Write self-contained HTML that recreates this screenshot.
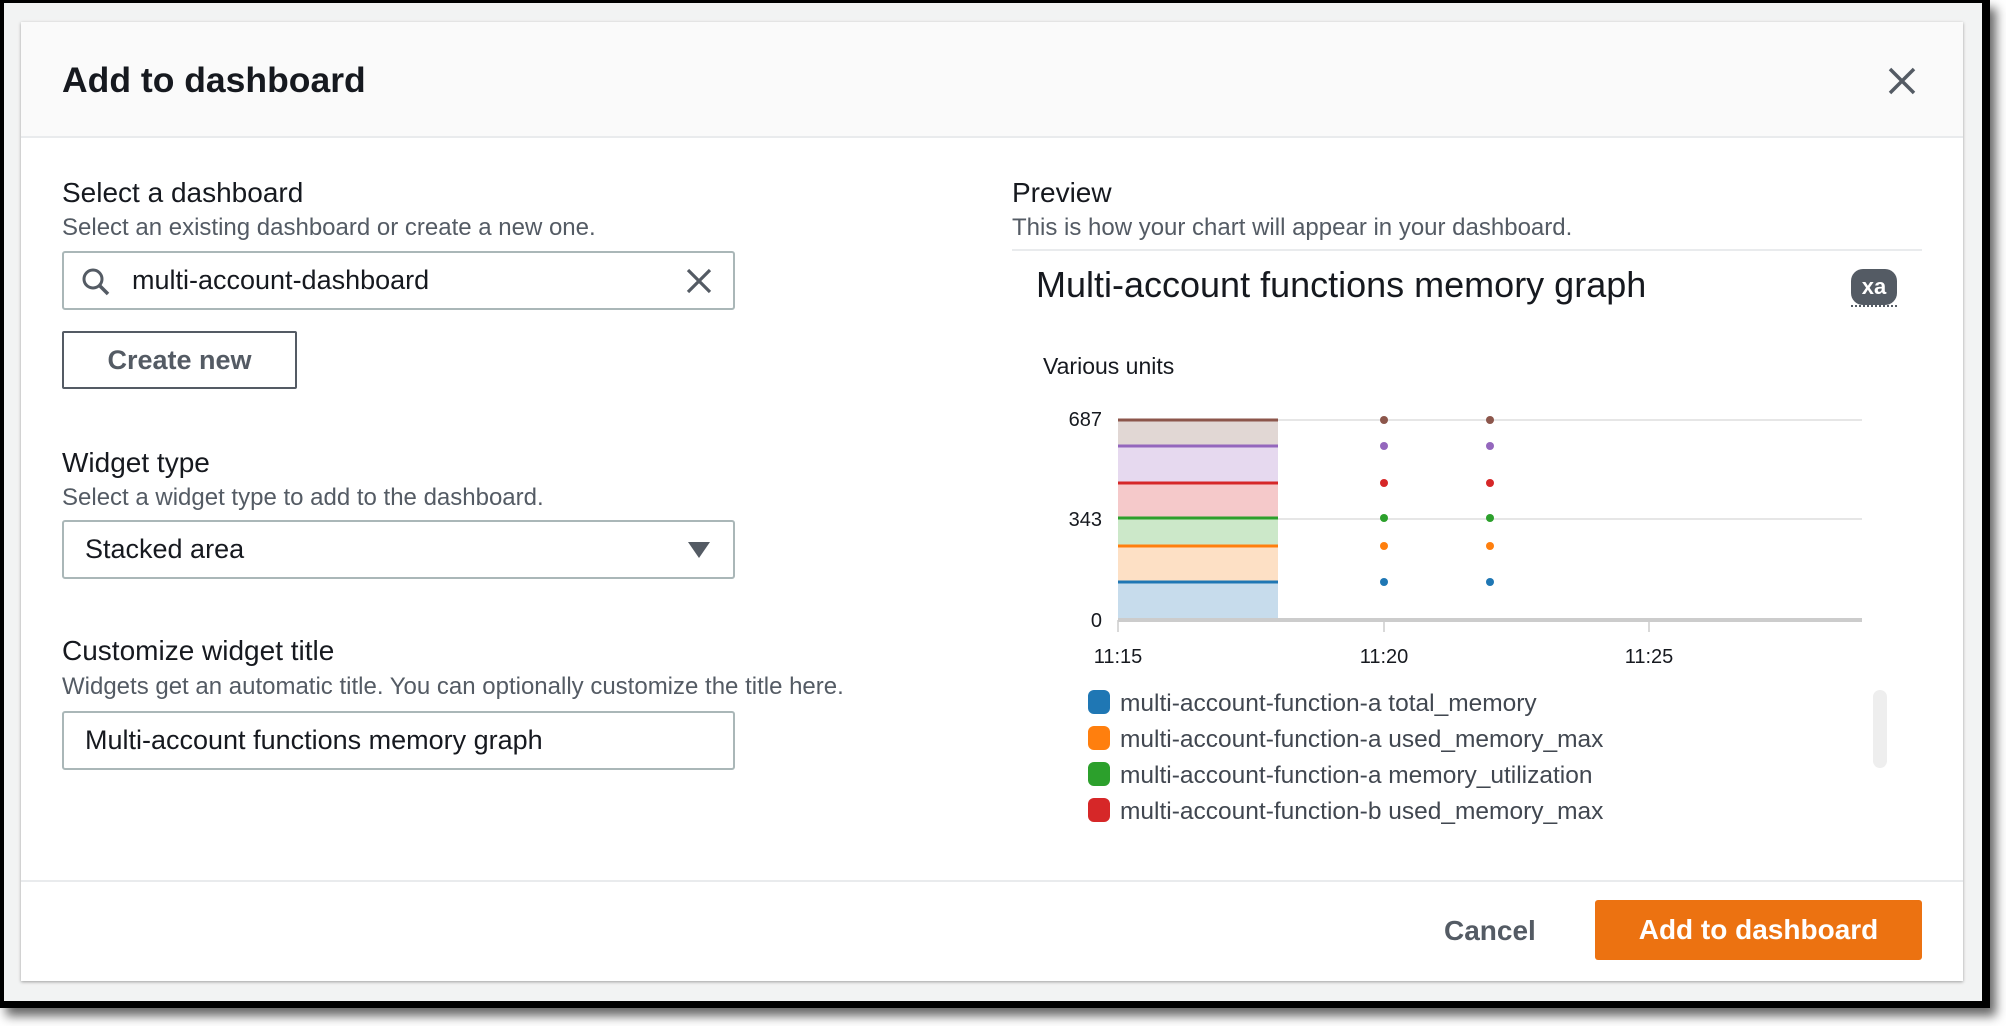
<!DOCTYPE html>
<html><head><meta charset="utf-8"><style>
*{margin:0;padding:0;box-sizing:border-box}
body{width:2006px;height:1026px;background:#fff;position:relative;overflow:hidden;font-family:"Liberation Sans",sans-serif;color:#16191f}
.frame{position:absolute;left:0;top:0;width:1990px;height:1008px;background:#000;box-shadow:6px 8px 10px rgba(0,0,0,.6)}
.bg{position:absolute;left:4px;top:3px;width:1978px;height:998px;background:#f2f3f3}
.modal{position:absolute;left:21px;top:22px;width:1942px;height:959px;background:#fff;box-shadow:0 1px 3px rgba(0,0,0,.35)}
.hdr{position:absolute;left:0;top:0;width:100%;height:116px;background:#fafafa;border-bottom:2px solid #e9ebed}
.abs{position:absolute;white-space:nowrap}
.lbl{font-size:28px;color:#16191f}
.desc{font-size:24px;color:#545b64}
.inp{position:absolute;border:2px solid #aab7b8;border-radius:3px;background:#fff}
</style></head><body>
<div class="frame"></div>
<div class="bg"></div>
<div class="modal">
 <div class="hdr"></div>
 <div class="abs" style="left:41px;top:38px;font-size:35.5px;font-weight:bold">Add to dashboard</div>
 <svg class="abs" style="left:1866px;top:44px" width="30" height="30" viewBox="0 0 30 30"><path d="M3 3L27 27M27 3L3 27" stroke="#545b64" stroke-width="3.5" fill="none"/></svg>

 <div class="abs lbl" style="left:41px;top:155px">Select a dashboard</div>
 <div class="abs desc" style="left:41px;top:192px">Select an existing dashboard or create a new one.</div>
 <div class="inp" style="left:41px;top:229px;width:673px;height:59px"></div>
 <svg class="abs" style="left:60px;top:245px" width="30" height="30" viewBox="0 0 30 30"><circle cx="12" cy="12" r="9" stroke="#545b64" stroke-width="3" fill="none"/><path d="M19 19L27 27" stroke="#545b64" stroke-width="3.5"/></svg>
 <div class="abs" style="left:111px;top:243px;font-size:27px">multi-account-dashboard</div>
 <svg class="abs" style="left:664px;top:245px" width="28" height="28" viewBox="0 0 28 28"><path d="M3 3L25 25M25 3L3 25" stroke="#545b64" stroke-width="3.2"/></svg>
 <div class="abs" style="left:41px;top:309px;width:235px;height:58px;border:2px solid #545b64;border-radius:2px;font-size:27px;font-weight:bold;color:#545b64;text-align:center;line-height:54px">Create new</div>

 <div class="abs lbl" style="left:41px;top:425px">Widget type</div>
 <div class="abs desc" style="left:41px;top:462px">Select a widget type to add to the dashboard.</div>
 <div class="inp" style="left:41px;top:498px;width:673px;height:59px"></div>
 <div class="abs" style="left:64px;top:512px;font-size:27px">Stacked area</div>
 <svg class="abs" style="left:667px;top:520px" width="22" height="16" viewBox="0 0 22 16"><path d="M0 0H22L11 16Z" fill="#545b64"/></svg>

 <div class="abs lbl" style="left:41px;top:613px">Customize widget title</div>
 <div class="abs desc" style="left:41px;top:651px">Widgets get an automatic title. You can optionally customize the title here.</div>
 <div class="inp" style="left:41px;top:689px;width:673px;height:59px"></div>
 <div class="abs" style="left:64px;top:703px;font-size:27px">Multi-account functions memory graph</div>

 <div class="abs lbl" style="left:991px;top:155px">Preview</div>
 <div class="abs desc" style="left:991px;top:192px">This is how your chart will appear in your dashboard.</div>
 <div class="abs" style="left:991px;top:227px;width:910px;height:2px;background:#e9ebed"></div>
 <div class="abs" style="left:1015px;top:242px;font-size:36px;color:#16191f">Multi-account functions memory graph</div>
 <div class="abs" style="left:1830px;top:247px;width:46px;height:36px;background:#545b64;border-radius:12px;color:#fff;font-weight:bold;font-size:22px;text-align:center;line-height:36px">xa</div>
 <div class="abs" style="left:1830px;top:283px;width:46px;border-top:2px dotted #545b64"></div>
 <div class="abs" style="left:1022px;top:331px;font-size:23px">Various units</div>

 <svg class="abs" style="left:0;top:0" width="1942" height="959">
  <g transform="translate(-21,-22)">
   <line x1="1118" y1="420" x2="1862" y2="420" stroke="#e6e6e6" stroke-width="2"/>
   <line x1="1118" y1="519" x2="1862" y2="519" stroke="#e6e6e6" stroke-width="2"/>
   <rect x="1118" y="420" width="160" height="26" fill="#e1d7d4"/>
   <rect x="1118" y="446" width="160" height="37" fill="#e6d9ef"/>
   <rect x="1118" y="483" width="160" height="35" fill="#f5c9ca"/>
   <rect x="1118" y="518" width="160" height="28" fill="#cce8c9"/>
   <rect x="1118" y="546" width="160" height="36" fill="#fde0c5"/>
   <rect x="1118" y="582" width="160" height="38" fill="#c7dcec"/>
   <line x1="1118" y1="420" x2="1278" y2="420" stroke="#8c564b" stroke-width="3"/>
   <line x1="1118" y1="446" x2="1278" y2="446" stroke="#9467bd" stroke-width="3"/>
   <line x1="1118" y1="483" x2="1278" y2="483" stroke="#d62728" stroke-width="3"/>
   <line x1="1118" y1="518" x2="1278" y2="518" stroke="#2ca02c" stroke-width="3"/>
   <line x1="1118" y1="546" x2="1278" y2="546" stroke="#ff7f0e" stroke-width="3"/>
   <line x1="1118" y1="582" x2="1278" y2="582" stroke="#1f77b4" stroke-width="3"/>
   <g>
    <circle cx="1384" cy="420" r="4" fill="#8c564b"/><circle cx="1490" cy="420" r="4" fill="#8c564b"/>
    <circle cx="1384" cy="446" r="4" fill="#9467bd"/><circle cx="1490" cy="446" r="4" fill="#9467bd"/>
    <circle cx="1384" cy="483" r="4" fill="#d62728"/><circle cx="1490" cy="483" r="4" fill="#d62728"/>
    <circle cx="1384" cy="518" r="4" fill="#2ca02c"/><circle cx="1490" cy="518" r="4" fill="#2ca02c"/>
    <circle cx="1384" cy="546" r="4" fill="#ff7f0e"/><circle cx="1490" cy="546" r="4" fill="#ff7f0e"/>
    <circle cx="1384" cy="582" r="4" fill="#1f77b4"/><circle cx="1490" cy="582" r="4" fill="#1f77b4"/>
   </g>
   <line x1="1118" y1="620" x2="1862" y2="620" stroke="#cccccc" stroke-width="4"/>
   <line x1="1118" y1="620" x2="1118" y2="632" stroke="#ccc" stroke-width="1.5"/>
   <line x1="1384" y1="620" x2="1384" y2="632" stroke="#ccc" stroke-width="1.5"/>
   <line x1="1649" y1="620" x2="1649" y2="632" stroke="#ccc" stroke-width="1.5"/>
   <g font-family="Liberation Sans" font-size="20" fill="#16191f">
    <text x="1102" y="426" text-anchor="end">687</text>
    <text x="1102" y="526" text-anchor="end">343</text>
    <text x="1102" y="627" text-anchor="end">0</text>
    <text x="1118" y="663" text-anchor="middle">11:15</text>
    <text x="1384" y="663" text-anchor="middle">11:20</text>
    <text x="1649" y="663" text-anchor="middle">11:25</text>
   </g>
   <rect x="1088" y="690" width="22" height="24" rx="6" fill="#1f77b4"/>
   <rect x="1088" y="726" width="22" height="24" rx="6" fill="#ff7f0e"/>
   <rect x="1088" y="762" width="22" height="24" rx="6" fill="#2ca02c"/>
   <rect x="1088" y="798" width="22" height="24" rx="6" fill="#d62728"/>
   <g font-family="Liberation Sans" font-size="24.5" fill="#414750">
    <text x="1120" y="711">multi-account-function-a total_memory</text>
    <text x="1120" y="747">multi-account-function-a used_memory_max</text>
    <text x="1120" y="783">multi-account-function-a memory_utilization</text>
    <text x="1120" y="819">multi-account-function-b used_memory_max</text>
   </g>
   <rect x="1873" y="690" width="14" height="78" rx="7" fill="#eeeeee"/>
  </g>
 </svg>

 <div class="abs" style="left:0;top:858px;width:100%;height:2px;background:#e9ebed"></div>
 <div class="abs" style="left:1423px;top:893px;font-size:28px;font-weight:bold;color:#545b64">Cancel</div>
 <div class="abs" style="left:1574px;top:878px;width:327px;height:60px;background:#ec7211;border-radius:3px;color:#fff;font-size:28px;font-weight:bold;text-align:center;line-height:60px">Add to dashboard</div>
</div>
</body></html>
